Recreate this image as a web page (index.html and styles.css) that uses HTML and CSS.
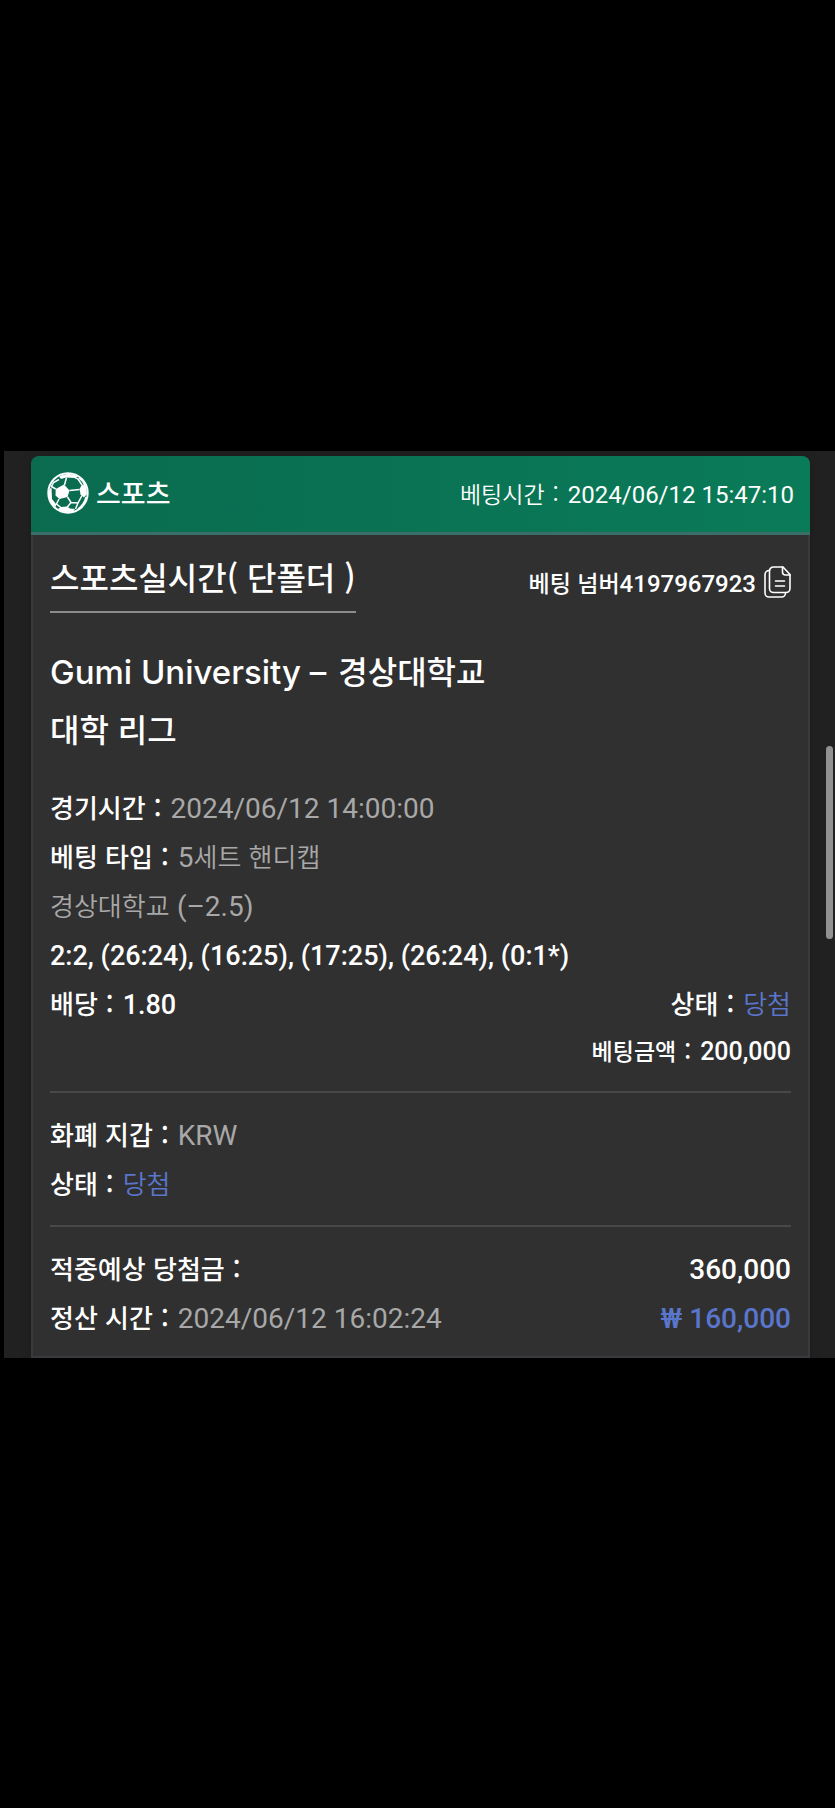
FILE: index.html
```
<!DOCTYPE html>
<html lang="ko">
<head>
  <meta charset="UTF-8">
  <meta name="viewport" content="width=device-width, initial-scale=1.0">
  <title>베팅 내역</title>
  <link rel="stylesheet" href="styles.css">
</head>
<body>

  <main class="panel">
    <article class="card">
      <header class="card-header">
        <div class="sport">
          <svg class="ball" viewBox="0 0 42 42" aria-hidden="true">
            <circle cx="21" cy="21" r="19.7" fill="none" stroke="#fff" stroke-width="2"/>
            <g fill="#fff">
              <path d="M8.700 17L17 12.500l5.500 6-2 6.500-8 2-4-3.500z"/>
              <path d="M12 4.500C17 1 26 1 31 4.500l-3 1.500-9-.5-5 1.500z"/>
              <path d="M32.500 17l2.500-4.500 4 1.500 1 8-3 3.500-3.500-3z"/>
              <path d="M14 35l6-.5 3 2 5 .5-2 3c-5 1-11 0-15-3z"/>
              <path d="M1.500 19l3-4 .5 12 4 5v3C3 31 1 25 1.500 19z"/>
            </g>
            <g fill="none" stroke="#fff" stroke-width="1.500">
              <path d="M17.500 13l2-7.500M28 5.500l3 1.500 4 6M22.500 18.500l10-1M20.500 25l3.500 5.500-4 5M24 30.500l7 .5 4-7.500M12 27l-2.500 5 5 4M8.700 17L4.500 14.500l2-4 5.500-3M31 31l-2.500 6M32 6c3 2 5 5 6 8M39 25c-1 5-4 9-8 12"/>
            </g>
          </svg>
          <span>스포츠</span>
        </div>
        <div class="bet-time">베팅시간<span class="colon">:</span><time class="num">2024/06/12 15:47:10</time></div>
      </header>

      <div class="card-body">
        <div class="row title-row">
          <h1>스포츠실시간( 단폴더 )</h1>
          <div class="bet-number">
            <span>베팅 넘버<span class="num">4197967923</span></span>
            <button type="button" class="copy" aria-label="베팅 넘버 복사">
              <svg viewBox="0 0 27 32" fill="none" stroke="#fff" stroke-width="1.600" stroke-linejoin="round" stroke-linecap="round">
                <path d="M9.500 1H19l7 7.500v14a4 4 0 0 1-4 4H9.500a4 4 0 0 1-4-4V5a4 4 0 0 1 4-4z"/>
                <path d="M18.500 1v5a3 3 0 0 0 3 3H26M11.500 15h9M11.500 20h9"/>
                <path d="M5.500 4.500A4 4 0 0 0 1 8.500V27a4 4 0 0 0 4 4h12.500a4 4 0 0 0 4-4"/>
              </svg>
            </button>
          </div>
        </div>

        <div class="match">
          <h2><span class="latin">Gumi University –</span> 경상대학교</h2>
          <h2>대학 리그</h2>
        </div>

        <section class="details">
          <p>경기시간<span class="colon">:</span><time class="num value">2024/06/12 14:00:00</time></p>
          <p>베팅 타입<span class="colon">:</span><span class="value"><span class="num">5</span>세트 핸디캡</span></p>
          <p class="value">경상대학교 <span class="num">(–2.5)</span></p>
          <p><span class="num score">2:2, (26:24), (16:25), (17:25), (26:24), (0:1*)</span></p>
          <div class="row">
            <p>배당<span class="colon">:</span><span class="num score">1.80</span></p>
            <p>상태<span class="colon">:</span><span class="win">당첨</span></p>
          </div>
          <p class="amount">베팅금액<span class="colon">:</span><span class="num">200,000</span></p>
        </section>

        <section class="details">
          <p>화폐 지갑<span class="colon">:</span><span class="num value">KRW</span></p>
          <p>상태<span class="colon">:</span><span class="win">당첨</span></p>
        </section>

        <section class="details">
          <div class="row">
            <p>적중예상 당첨금<span class="colon">:</span></p>
            <p><span class="num">360,000</span></p>
          </div>
          <div class="row">
            <p>정산 시간<span class="colon">:</span><time class="num value">2024/06/12 16:02:24</time></p>
            <p><span class="num profit">₩ 160,000</span></p>
          </div>
        </section>
      </div>
    </article>
    <div class="scroll-thumb"></div>
  </main>

</body>
</html>
```

FILE: styles.css
```
* {
  box-sizing: border-box;
}
body {
  display: flex;
  flex-direction: column;
  justify-content: center;
  min-height: 100vh;
  margin: 0;
  background-color: #000;
  color: #fff;
  font-family: "Noto Sans CJK KR", sans-serif;
  font-size: 26px;
  font-weight: 500;
}
h1, h2, p {
  margin: 0;
  font-weight: 500;
}
.panel {
  position: relative;
  overflow: hidden;
  margin-left: 4px;
  padding: 5px 25px 0 27px;
  background-color: #212121;
}
.card {
  border-radius: 8px 8px 0 0;
  background-color: #303030;
  box-shadow: 0 0 10px #1c1c1e;
}
.card-header {
  display: flex;
  justify-content: space-between;
  align-items: center;
  height: 79px;
  padding: 0 16px 2px;
  border-bottom: 3px solid #3a6e68;
  border-radius: 8px 8px 0 0;
  background: linear-gradient(to right, #0a6b4f, #0a7b58);
}
.sport {
  display: flex;
  align-items: center;
  gap: 7px;
  font-size: 27px;
}
.ball {
  width: 42px;
  height: 42px;
}
.bet-time {
  font-size: 23px;
  font-weight: 350;
}
.num {
  font-family: Roboto, "Noto Sans CJK KR", sans-serif;
  font-size: 28px;
  line-height: 1;
}
.bet-time .num {
  font-size: 24px;
  font-weight: 400;
}
.colon {
  margin: 0 9px 0 8px;
}
.card-body {
  padding: 16px 17px 15px;
  border: 2px solid #3a3a3e;
  border-top: 0;
}
.row {
  display: flex;
  justify-content: space-between;
}
.title-row {
  align-items: center;
}
h1 {
  padding-bottom: 10px;
  border-bottom: 2px solid #8c8c8c;
  font-size: 32px;
  line-height: 50px;
}
h2 {
  font-size: 32px;
  line-height: 58px;
}
.bet-number {
  display: flex;
  align-items: center;
  gap: 8px;
  font-size: 23px;
}
.bet-number .num {
  font-size: 24px;
}
.copy {
  display: flex;
  padding: 0;
  border: 0;
  background: none;
  cursor: pointer;
}
.copy svg {
  width: 27px;
  height: 32px;
}
.match {
  padding: 28px 0 25px;
}
.latin {
  margin-right: 3px;
  font-family: Inter, sans-serif;
  font-size: 33px;
  line-height: 1;
}
.details {
  line-height: 49px;
}
.details + .details {
  margin-top: 18px;
  padding-top: 16px;
  border-top: 2px solid #484848;
}
.value {
  color: #a8a8a8;
  font-weight: 350;
}
.num.value, .value .num {
  font-weight: 400;
}
.win {
  color: #5a76cc;
  font-weight: 350;
}
.profit {
  color: #5a76cc;
}
.num.score {
  font-size: 27px;
}
.amount {
  font-size: 23px;
  line-height: 46px;
  text-align: right;
}
.amount .num {
  font-size: 25px;
}
.scroll-thumb {
  position: absolute;
  top: 295px;
  right: 2px;
  width: 7px;
  height: 193px;
  border-radius: 4px;
  background-color: #929292;
}
```
